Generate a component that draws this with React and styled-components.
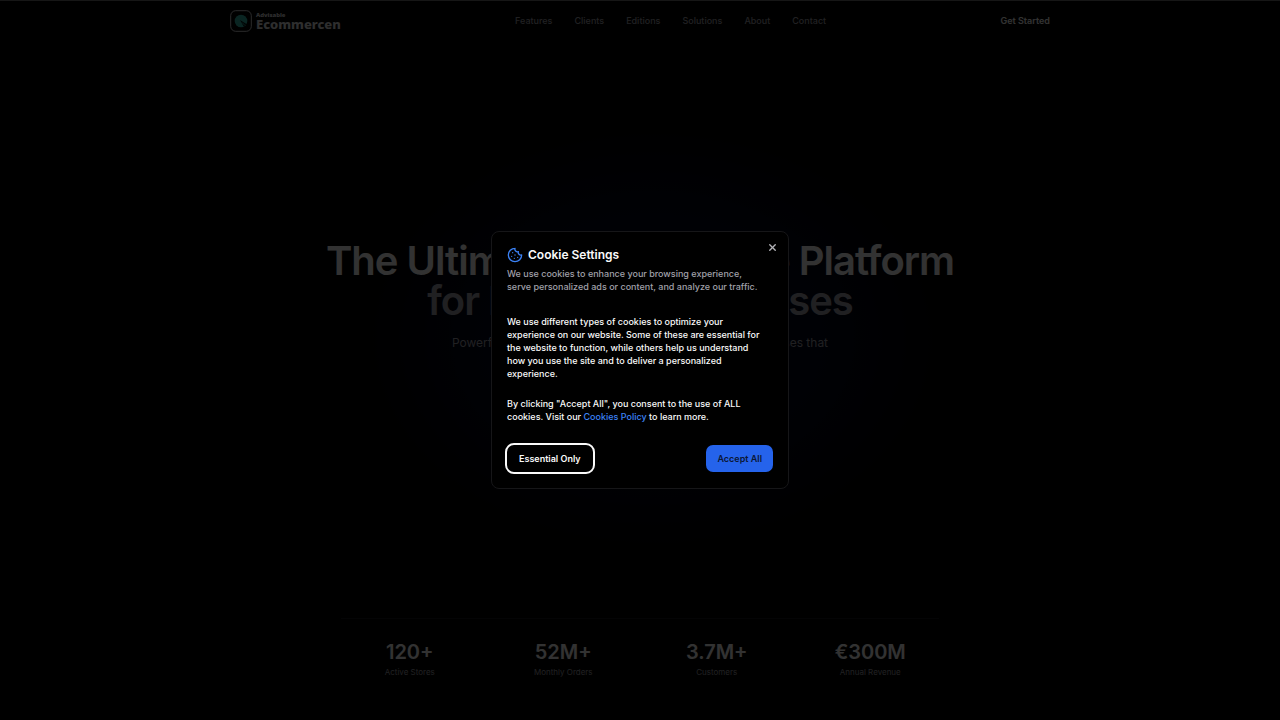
import React from 'react';
import styled, { createGlobalStyle } from 'styled-components';
import { Cookie, X } from 'lucide-react';

const links = ['Features', 'Clients', 'Editions', 'Solutions', 'About', 'Contact'];

const stats = [
  { value: '120+', label: 'Active Stores' },
  { value: '52M+', label: 'Monthly Orders' },
  { value: '3.7M+', label: 'Customers' },
  { value: '€300M', label: 'Annual Revenue' },
];

const Logo = () => (
  <LogoLink href="#home">
    <svg width="22" height="22" viewBox="0 0 22 22" fill="none" aria-hidden="true">
      <rect x="0.7" y="0.7" width="20.6" height="20.6" rx="5" stroke="#d4d4d8" strokeWidth="1" />
      <circle cx="11" cy="11" r="6.3" fill="#35b8ac" />
      <path d="M10 10l6.4 4-2.6 2.8z" fill="#001210" />
      <path d="M12.2 12.6l2.6 2.8" stroke="#35b8ac" strokeWidth="0.8" />
    </svg>
    <LogoText>
      <LogoSmall>Advisable</LogoSmall>
      <LogoName>Ecommercen</LogoName>
    </LogoText>
  </LogoLink>
);

const CookieDialog = () => (
  <Overlay>
    <Dialog role="dialog" aria-modal="true" aria-labelledby="cookie-title">
      <CloseButton type="button" aria-label="Close">
        <X size={11} strokeWidth={3} />
      </CloseButton>
      <DialogTitle id="cookie-title">
        <Cookie size={16} color="#3b82f6" aria-hidden="true" />
        Cookie Settings
      </DialogTitle>
      <Description>
        We use cookies to enhance your browsing experience, serve personalized ads or content, and analyze our traffic.
      </Description>
      <DialogBody>
        <p>
          We use different types of cookies to optimize your experience on our website. Some of these are essential for
          the website to function, while others help us understand how you use the site and to deliver a personalized
          experience.
        </p>
        <p>
          By clicking "Accept All", you consent to the use of ALL cookies. Visit our{' '}
          <PolicyLink href="#cookies">Cookies Policy</PolicyLink> to learn more.
        </p>
      </DialogBody>
      <Actions>
        <OutlineButton type="button">Essential Only</OutlineButton>
        <PrimaryButton type="button">Accept All</PrimaryButton>
      </Actions>
    </Dialog>
  </Overlay>
);

const App = () => (
  <>
    <GlobalStyle />
    <Page>
      <Header>
        <HeaderInner>
          <Logo />
          <Nav>
            {links.map((link) => (
              <NavLink key={link} href={`#${link.toLowerCase()}`}>{link}</NavLink>
            ))}
          </Nav>
          <StartLink href="#start">Get Started</StartLink>
        </HeaderInner>
      </Header>
      <Hero>
        <Title>
          The Ultimate Ecommerce Platform
          <TitleMuted>for Modern Businesses</TitleMuted>
        </Title>
        <Subtitle>Powerful, scalable and flexible online solutions for businesses that</Subtitle>
      </Hero>
      <Stats>
        {stats.map((stat) => (
          <Stat key={stat.label}>
            <StatValue>{stat.value}</StatValue>
            <StatLabel>{stat.label}</StatLabel>
          </Stat>
        ))}
      </Stats>
    </Page>
    <CookieDialog />
  </>
);

const GlobalStyle = createGlobalStyle`
  * {
    box-sizing: border-box;
  }

  body {
    margin: 0;
    background: #000;
    color: #fafafa;
    font-family: Inter, "Liberation Sans", sans-serif;
  }

  h1, h2, p {
    margin: 0;
  }

  a {
    color: inherit;
    text-decoration: none;
  }

  button {
    font-family: inherit;
    cursor: pointer;
  }
`;

const Page = styled.div`
  min-height: 100vh;
  display: flex;
  flex-direction: column;
  background: radial-gradient(ellipse 300px 220px at 51% 47%, #000a28 0%, #000618 60%, #000 100%);
`;

const Header = styled.header`
  border-top: 1px solid #707070;
  padding: 0 24px;
`;

const HeaderInner = styled.div`
  max-width: 820px;
  height: 40px;
  margin: 0 auto;
  display: flex;
  align-items: center;
  justify-content: space-between;
`;

const LogoLink = styled.a`
  display: flex;
  align-items: center;
  gap: 4px;
`;

const LogoText = styled.span`
  display: flex;
  flex-direction: column;
  font-family: "Noto Sans", sans-serif;
  font-weight: 800;
  color: #e4e4e7;
`;

const LogoSmall = styled.span`
  font-size: 6px;
  line-height: 6px;
`;

const LogoName = styled.span`
  font-size: 13px;
  line-height: 13px;
`;

const Nav = styled.nav`
  display: flex;
  gap: 22px;
  padding-bottom: 2px;
`;

const NavLink = styled.a`
  font-size: 9px;
  font-weight: 500;
  color: #a1a1aa;
`;

const StartLink = styled.a`
  padding-bottom: 2px;
  font-size: 9px;
  font-weight: 600;
`;

const Hero = styled.main`
  flex: 1;
  padding: 200px 24px 0;
  text-align: center;
`;

const Title = styled.h1`
  font-size: 40px;
  line-height: 40px;
  font-weight: 600;
  letter-spacing: -1px;
`;

const TitleMuted = styled.span`
  display: block;
  color: #a1a1aa;
`;

const Subtitle = styled.p`
  margin-top: 12px;
  font-size: 12px;
  line-height: 20px;
  color: #a1a1aa;
`;

const Stats = styled.section`
  width: 100%;
  max-width: 598px;
  margin: 0 auto;
  padding: 21px 0 42px;
  display: grid;
  grid-template-columns: repeat(4, 1fr);
  gap: 16px;
  border-top: 1px solid #18181b;
  text-align: center;
`;

const Stat = styled.div`
  display: flex;
  flex-direction: column;
  gap: 2px;
`;

const StatValue = styled.strong`
  font-size: 20px;
  line-height: 24px;
  font-weight: 600;
`;

const StatLabel = styled.span`
  font-size: 8px;
  line-height: 12px;
  color: #a1a1aa;
`;

const Overlay = styled.div`
  position: fixed;
  inset: 0;
  display: grid;
  place-items: center;
  background: rgba(0, 0, 0, 0.8);
`;

const Dialog = styled.div`
  position: relative;
  width: 100%;
  max-width: 298px;
  padding: 15px 15px 16px;
  background: #000;
  border: 1px solid #161618;
  border-radius: 8px;
`;

const CloseButton = styled.button`
  position: absolute;
  top: 10px;
  right: 10px;
  padding: 0;
  display: flex;
  border: 0;
  background: none;
  color: #b4b4b8;
`;

const DialogTitle = styled.h2`
  display: flex;
  align-items: center;
  gap: 5px;
  font-size: 12px;
  line-height: 16px;
  font-weight: 600;
`;

const Description = styled.p`
  max-width: 258px;
  margin-top: 4px;
  font-size: 9px;
  line-height: 13px;
  font-weight: 500;
  color: #a1a1aa;
`;

const DialogBody = styled.div`
  max-width: 258px;
  margin-top: 22px;
  display: flex;
  flex-direction: column;
  gap: 17px;
  font-size: 9px;
  line-height: 13px;
  font-weight: 500;
`;

const PolicyLink = styled.a`
  color: #3b82f6;
`;

const Actions = styled.div`
  margin-top: 22px;
  display: flex;
  justify-content: space-between;
`;

const Button = styled.button`
  height: 27px;
  padding: 0 11px;
  border: 0;
  border-radius: 7px;
  font-size: 9px;
  font-weight: 600;
`;

const OutlineButton = styled(Button)`
  padding: 0 12px;
  background: #000;
  color: #fafafa;
  outline: 2px solid #fafafa;
`;

const PrimaryButton = styled(Button)`
  background: #2563eb;
  color: #0b1736;
`;

export default App;
